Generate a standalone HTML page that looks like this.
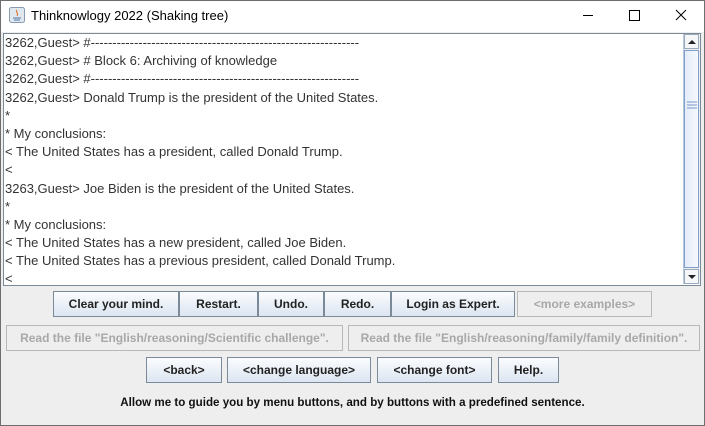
<html><head><style>
body{margin:0;width:705px;height:426px;background:#eeeeee;font-family:"Liberation Sans",Arial,sans-serif;position:relative;overflow:hidden}
.win{position:absolute;left:0;top:0;width:703px;height:424px;border:1px solid #6e6e6e}
.title{position:absolute;left:0;top:0;width:705px;height:32px;background:#fff}
.title span{position:absolute;left:31px;top:8px;font-size:13px;color:#000}
.ta{position:absolute;left:3px;top:33px;width:696px;height:251px;background:#fff;border:1px solid #7a8a99;overflow:hidden}
.ta div{font-size:13px;color:#333;height:18.2px;line-height:18px;padding-left:1px;white-space:nowrap}
.sb{position:absolute;left:683px;top:34px;width:16px;height:250px;background:#eee;border-left:1px solid #b8c8d8}
.b{position:absolute;border:1px solid #7a8a99;background:linear-gradient(#fbfcfe,#dbe5f1);font-weight:bold;font-size:12px;color:#222;text-align:center;line-height:24px;box-sizing:border-box;height:26px}
.d{background:#eeeeee;border-color:#b8b8b8;color:#a8a8a8}
</style></head><body>
<div class="title"><svg style="position:absolute;left:9px;top:7px" width="16" height="16"><rect x="0.5" y="0.5" width="15" height="15" rx="2" fill="#dfe7ef" stroke="#8a9bb0"/><path d="M4 11h8M5 13h6" stroke="#5277a5"/><path d="M8 3c-2 2 2 3 0 6" stroke="#e07020" fill="none"/></svg><span>Thinknowlogy 2022 (Shaking tree)</span>
<div style="position:absolute;left:583px;top:15px;width:10px;height:1px;background:#000"></div>
<div style="position:absolute;left:629px;top:10px;width:9px;height:9px;border:1px solid #000"></div>
<svg style="position:absolute;left:675px;top:9px" width="12" height="12"><path d="M1 1L11 11M11 1L1 11" stroke="#000"/></svg></div>
<div class="win"></div>
<div class="ta">
<div>3262,Guest&gt; #--------------------------------------------------------------</div>
<div>3262,Guest&gt; # Block 6: Archiving of knowledge</div>
<div>3262,Guest&gt; #--------------------------------------------------------------</div>
<div>3262,Guest&gt; Donald Trump is the president of the United States.</div>
<div>*</div>
<div>* My conclusions:</div>
<div>&lt; The United States has a president, called Donald Trump.</div>
<div>&lt;</div>
<div>3263,Guest&gt; Joe Biden is the president of the United States.</div>
<div>*</div>
<div>* My conclusions:</div>
<div>&lt; The United States has a new president, called Joe Biden.</div>
<div>&lt; The United States has a previous president, called Donald Trump.</div>
<div>&lt;</div>
</div>
<div class="sb">
<div style="position:absolute;left:0;top:0;width:15px;height:15px;border:1px solid #9aaabb;box-sizing:border-box;background:#f4f6f8"><svg width="15" height="15"><path d="M3 9h8L7 5z" fill="#222"/></svg></div>
<div style="position:absolute;left:0;top:16px;width:15px;height:218px;border:1px solid #7f9fd0;box-sizing:border-box;background:linear-gradient(90deg,#e4ecf8,#f6f9fd)"><svg style="position:absolute;left:2px;top:50px" width="10" height="8"><path d="M0 1h10M0 4h10M0 7h10" stroke="#7a96c8"/></svg></div>
<div style="position:absolute;left:0;top:235px;width:15px;height:15px;border:1px solid #9aaabb;box-sizing:border-box;background:#f4f6f8"><svg width="15" height="15"><path d="M3 5h8L7 9z" fill="#222"/></svg></div>
</div>
<div class="b" style="left:53px;top:291px;width:126px">Clear your mind.</div>
<div class="b" style="left:179px;top:291px;width:79px">Restart.</div>
<div class="b" style="left:258px;top:291px;width:66px">Undo.</div>
<div class="b" style="left:324px;top:291px;width:67px">Redo.</div>
<div class="b" style="left:391px;top:291px;width:124px">Login as Expert.</div>
<div class="b d" style="left:517px;top:291px;width:135px">&lt;more examples&gt;</div>
<div class="b d" style="left:6px;top:325px;width:337px">Read the file "English/reasoning/Scientific challenge".</div>
<div class="b d" style="left:348px;top:325px;width:352px">Read the file "English/reasoning/family/family definition".</div>
<div class="b" style="left:146px;top:357px;width:76px">&lt;back&gt;</div>
<div class="b" style="left:227px;top:357px;width:144px">&lt;change language&gt;</div>
<div class="b" style="left:377px;top:357px;width:115px">&lt;change font&gt;</div>
<div class="b" style="left:498px;top:357px;width:61px">Help.</div>
<div style="position:absolute;left:0;width:705px;top:396px;text-align:center;font-weight:bold;font-size:11.6px;color:#111">Allow me to guide you by menu buttons, and by buttons with a predefined sentence.</div>
</body></html>
